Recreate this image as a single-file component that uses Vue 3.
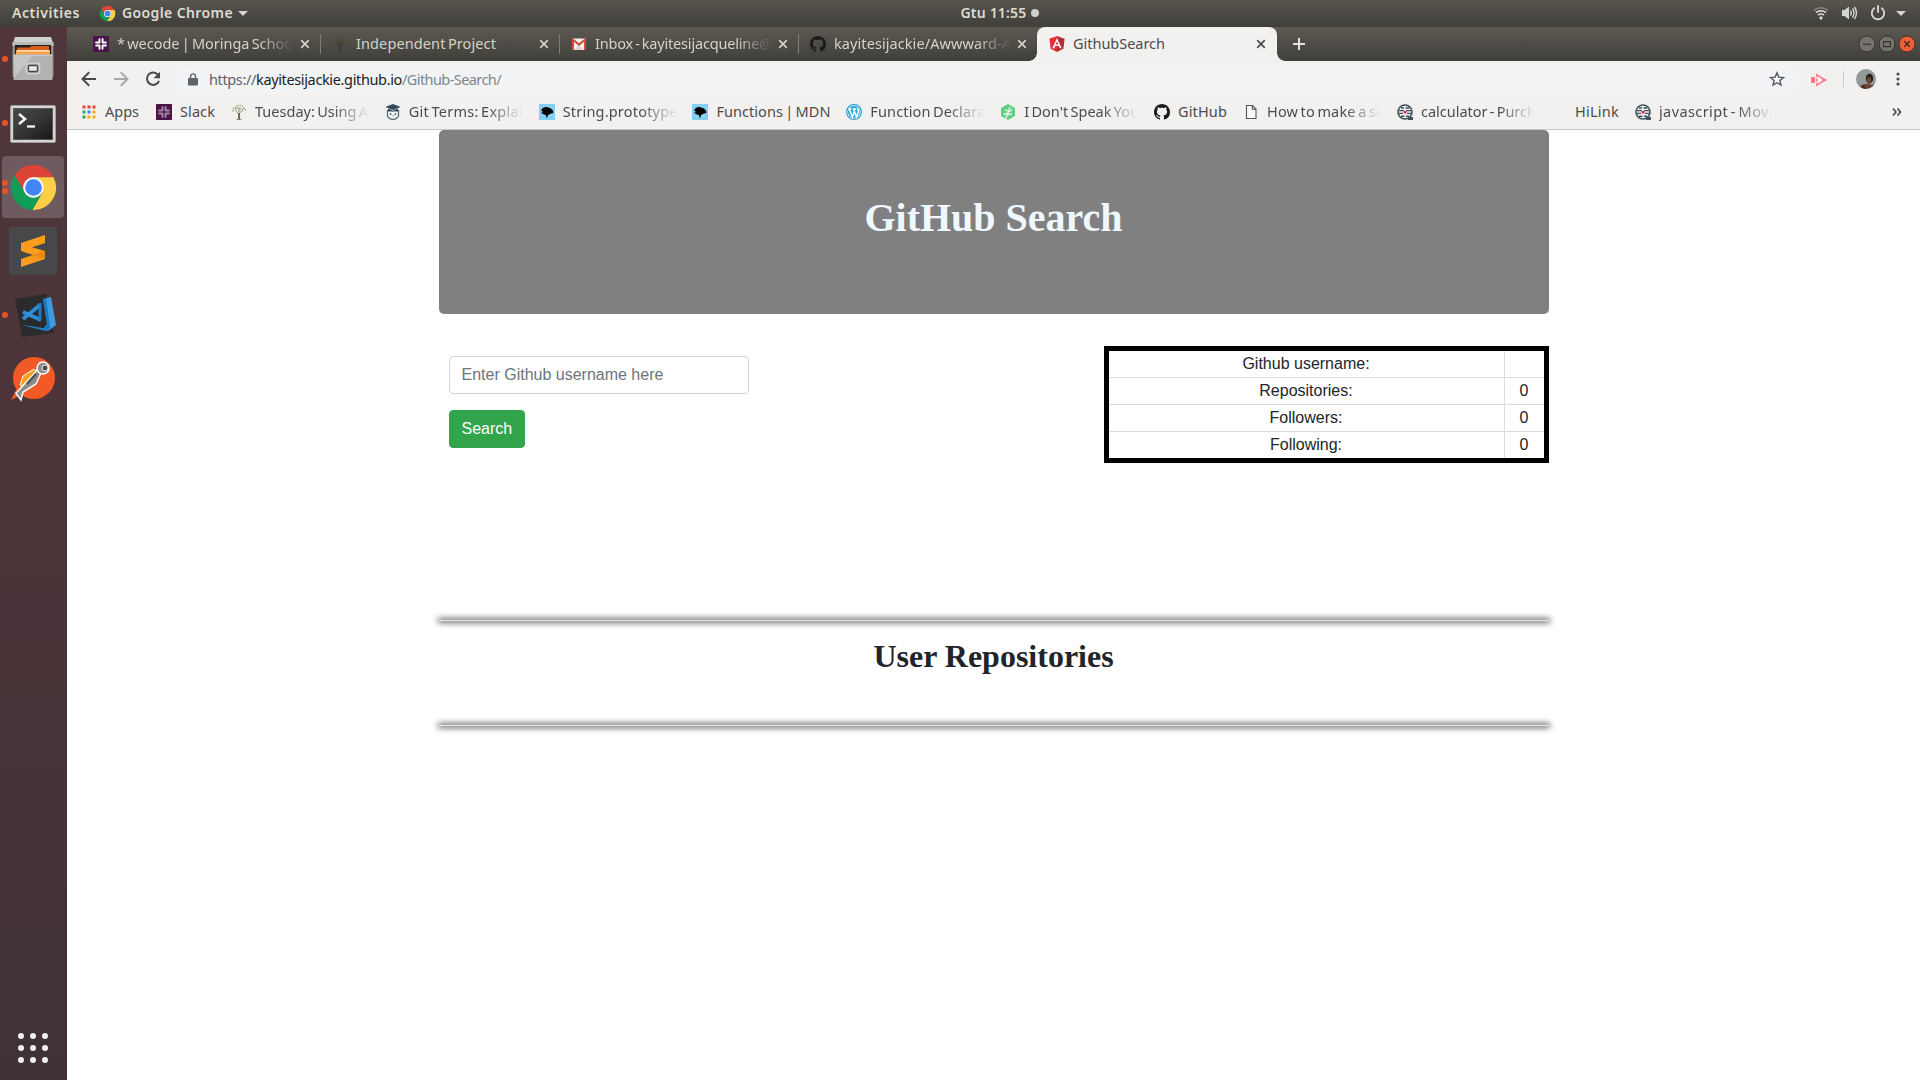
<script setup>
const tabs = [
  { icon: 'slack', title: '* wecode | Moringa Schoo', w: 176, fade: true },
  { icon: 'tree-dark', title: 'Independent Project', w: 140 },
  { icon: 'gmail', title: 'Inbox - kayitesijacqueline@', w: 177, fade: true },
  { icon: 'github', title: 'kayitesijackie/Awwward-A', w: 177, fade: true },
  { icon: 'angular', title: 'GithubSearch', w: 92, active: true },
]

const bookmarks = [
  { icon: 'apps', title: 'Apps', w: 34, item: 75 },
  { icon: 'slack-muted', title: 'Slack', w: 35, item: 75 },
  { icon: 'tree', title: 'Tuesday: Using A', w: 113, item: 153.83, fade: true },
  { icon: 'owl', title: 'Git Terms: Explai', w: 114, item: 153.83, fade: true },
  { icon: 'mdn', title: 'String.prototype', w: 115, item: 153.83, fade: true },
  { icon: 'mdn', title: 'Functions | MDN', w: 114, item: 153.83 },
  { icon: 'wordpress', title: 'Function Declara', w: 115, item: 153.83, fade: true },
  { icon: 'treehouse', title: "I Don't Speak You", w: 115, item: 153.83, fade: true },
  { icon: 'github', title: 'GitHub', w: 49, item: 89 },
  { icon: 'page', title: 'How to make a si', w: 113, item: 154, fade: true },
  { icon: 'movie', title: 'calculator - Purch', w: 115, item: 154, fade: true },
  { icon: '', title: 'HiLink', w: 44, item: 84 },
  { icon: 'movie', title: 'javascript - Movi', w: 114, item: 154, fade: true },
]

const stats = [
  ['Github username:', ''],
  ['Repositories:', '0'],
  ['Followers:', '0'],
  ['Following:', '0'],
]

// Adjusts tracking so that a label takes the given width in pixels.
const vFit = {
  mounted(el, { value }) {
    el.style.letterSpacing = '0px'
    const range = document.createRange()
    range.selectNodeContents(el)
    const natural = range.getBoundingClientRect().width
    el.style.letterSpacing = `${(value - natural) / el.textContent.length}px`
  },
}
</script>

<template>
  <svg class="defs" width="0" height="0">
    <symbol id="i-chrome" viewBox="0 0 48 48">
      <path fill="#dc4437" d="M5.5 12A22 22 0 0 1 43.6 14H24L15.3 29z" />
      <path fill="#ffce44" d="M43.6 14A22 22 0 0 1 22.9 46L32.7 29 24 14z" />
      <path fill="#109d58" d="M22.9 46A22 22 0 0 1 5.5 12L15.3 29H32.7z" />
      <circle cx="24" cy="24" r="10.2" fill="#f1f1f1" />
      <circle cx="24" cy="24" r="8.1" fill="#4285f4" />
    </symbol>
    <symbol id="i-slack" viewBox="0 0 16 16">
      <path fill="#4a154b" d="M0 0h16v16H0z" />
      <g fill="none" stroke="#fff" stroke-width="1.9" stroke-linecap="round">
        <path d="M6.5 5.8V3.2M3 6.5h3.5M9.600 3v3.500M9.600 6.500h3.200M3.200 9.500h3.300M6.500 9.500v3.400M9.500 9.500H13M9.500 9.500v3.300" />
      </g>
    </symbol>
    <symbol id="i-slack-muted" viewBox="0 0 16 16">
      <path fill="#4a154b" d="M0 0h16v16H0z" />
      <g fill="none" stroke="#a58aa6" stroke-width="1.900" stroke-linecap="round">
        <path d="M6.500 5.800V3.200M3 6.500h3.500M9.600 3v3.500M9.600 6.500h3.200M3.200 9.500h3.300M6.500 9.500v3.400M9.500 9.500H13M9.500 9.500v3.300" />
      </g>
    </symbol>
    <symbol id="i-tree" viewBox="0 0 16 16">
      <path fill="none" stroke="#77765c" stroke-width=".9" d="M8 10L4.500 6.500M8 9.500L11.800 6M8 8V3.500M5.500 15.300h5" />
      <path fill="none" stroke="#a0a57c" stroke-width="1.500" stroke-dasharray="1.500 1" d="M2 7.500Q1.500 3.500 5 3.500Q6 .8 9 1.500Q12.500 1.500 12.500 4.200Q15 5 14 7.500M4 5.500Q8 3 12 6" />
      <path stroke="#5b5a44" stroke-width="1.700" d="M8 15.500V9" />
    </symbol>
    <symbol id="i-tree-dark" viewBox="0 0 16 16">
      <path fill="none" stroke="#403f2e" stroke-width="1.100" d="M8 15.500V8M8 10L4.500 6.500M8 9.500L11.800 6M8 8V3.500" />
      <path fill="none" stroke="#4a4b2c" stroke-width="1.500" stroke-dasharray="1.500 1" d="M2 7.500Q1.500 3.500 5 3.500Q6 .8 9 1.500Q12.500 1.500 12.500 4.200Q15 5 14 7.500M4 5.500Q8 3 12 6" />
      <path stroke="#3a392b" stroke-width="1.800" d="M8 15V9" />
    </symbol>
    <symbol id="i-gmail" viewBox="0 0 16 16">
      <path fill="#f2f2f2" d="M1 2.500h14v11.500H1z" />
      <path fill="#d8d8d8" d="M3 14l5-5 5 5z" />
      <path fill="#d54b3d" d="M1 2.500h2v11.500H1zM13 2.500h2v11.500h-2z" />
      <path fill="none" stroke="#d54b3d" stroke-width="2" d="M1.500 3.200L8 8.600l6.500-5.400" />
    </symbol>
    <symbol id="i-github" viewBox="0 0 16 16">
      <path fill="#1b1b1b" d="M8 0C3.58 0 0 3.58 0 8c0 3.54 2.29 6.53 5.47 7.59.4.07.55-.17.55-.38 0-.19-.01-.82-.01-1.49-2.01.37-2.53-.49-2.69-.94-.09-.23-.48-.94-.82-1.13-.28-.15-.68-.52-.01-.53.63-.01 1.08.58 1.23.82.72 1.21 1.87.87 2.33.66.07-.52.28-.87.51-1.07-1.78-.2-3.64-.89-3.64-3.95 0-.87.31-1.59.82-2.15-.08-.2-.36-1.02.08-2.12 0 0 .67-.21 2.2.82.64-.18 1.32-.27 2-.27s1.36.09 2 .27c1.53-1.04 2.2-.82 2.2-.82.44 1.1.16 1.92.08 2.12.51.56.82 1.27.82 2.15 0 3.07-1.87 3.75-3.65 3.95.29.25.54.73.54 1.48 0 1.07-.01 1.93-.01 2.2 0 .21.15.46.55.38A8.01 8.01 0 0 0 16 8c0-4.42-3.58-8-8-8z" />
    </symbol>
    <symbol id="i-angular" viewBox="0 0 16 16">
      <path fill="#e23237" d="M8 0L.4 2.700l1.200 10L8 16z" />
      <path fill="#b52e31" d="M8 0l7.600 2.700-1.200 10L8 16z" />
      <path fill="#fff" fill-rule="evenodd" d="M8 2L3.400 12.200h1.900l.8-2.300h3.800l.8 2.300h1.900zM8 5.200l1.300 3.200H6.700z" />
    </symbol>
    <symbol id="i-apps" viewBox="0 0 16 16">
      <path fill="#ea4335" d="M1.500 1.500h3v3h-3zM6.500 1.500h3v3h-3zM11.500 1.500h3v3h-3z" />
      <path fill="#34a853" d="M1.500 6.500h3v3h-3zM1.500 11.500h3v3h-3z" />
      <path fill="#4285f4" d="M6.500 6.500h3v3h-3z" />
      <path fill="#fbae17" d="M11.500 6.500h3v3h-3zM6.500 11.500h3v3h-3zM11.500 11.500h3v3h-3z" />
    </symbol>
    <symbol id="i-owl" viewBox="0 0 16 16">
      <path fill="#fafafa" stroke="#4a6576" stroke-width="1.200" d="M2.500 6.500Q8 8 13.500 6.500V12q-1.500 3.300-5.500 3.300T2.500 12z" />
      <path fill="#2e4a5c" d="M8 0L.3 3 8 6l7.700-3zM3 4.500v3L8 6.500l5 1v-3L8 6.500z" />
      <circle cx="5.600" cy="10" r="1" fill="#4a6576" /><circle cx="10.400" cy="10" r="1" fill="#4a6576" />
      <path fill="#2e4a5c" d="M7.200 11.500h1.600l-.8 1.300z" />
    </symbol>
    <symbol id="i-mdn" viewBox="0 0 16 16">
      <path fill="#83d0f2" d="M0 0h16v16H0z" />
      <path fill="#000" d="M2 6.500L3.500 4.300Q6 2.500 8.500 3.200l3 1 2.700 2.600.1 2.200-3 .7-2.200 1.300-1.300 3.500-.8-3.200L4 10l-2-1.200L4.200 8z" />
    </symbol>
    <symbol id="i-wordpress" viewBox="0 0 16 16">
      <circle cx="8" cy="8" r="7.400" fill="#f4f8fa" stroke="#22a0d0" stroke-width="1.200" />
      <circle cx="8" cy="8" r="6" fill="#2aa6d6" />
      <path fill="none" stroke="#fff" stroke-width="1.500" d="M2.500 5h3M6.800 5h3.400M3.400 5l3 8L8.200 8M7.600 5l2.900 8 2.200-6.200-1.300-2.500" />
    </symbol>
    <symbol id="i-treehouse" viewBox="0 0 16 16">
      <path fill="#5fcf80" d="M8 0l7 4v8l-7 4-7-4V4z" />
      <path fill="none" stroke="#f4f4f2" stroke-width="1.300" stroke-linecap="round" d="M6 14L9.800 3.500M8.500 7L5.500 6M8.300 8l3.700-2M7.500 9.800l-3.500.2M7.300 10.500l4.200-.5" />
    </symbol>
    <symbol id="i-page" viewBox="0 0 16 16">
      <path fill="#fafafa" stroke="#555" stroke-width="1.100" d="M3.500 1.500h6l3.500 3.500v9.500H3.500zM9.300 1.500v3.800H13" />
    </symbol>
    <symbol id="i-movie" viewBox="0 0 16 16">
      <circle cx="8" cy="8" r="7" fill="#eef1f2" stroke="#40525b" stroke-width="1.600" />
      <path fill="#40525b" d="M11 13h5v3h-5zM4 3.200h3v1.500H4zM8.500 3.200h4v1.500h-4zM2 6h5v1.300H2zM9 6h5v1.300H9zM2 8.700h4V10H2zM10 8.700h4V10h-4zM4 11.400h3.500v1.500H4zM9 11.400h3v1.500H9z" />
      <path fill="#e4173c" d="M6.800 7h2.600v2.400H6.800z" />
    </symbol>
    <symbol id="i-close" viewBox="0 0 10 10">
      <path fill="none" stroke="currentColor" stroke-width="1.700" d="M1.200 1.200l7.600 7.600M8.800 1.200L1.200 8.800" />
    </symbol>
  </svg>

  <div class="desktop">
    <header class="topbar">
      <div class="top-left">
        <span v-fit="68" class="activities">Activities</span>
        <svg class="top-chrome" width="17" height="17"><use href="#i-chrome" /></svg>
        <span v-fit="111">Google Chrome</span>
        <i class="caret"></i>
      </div>
      <div class="clock"><span v-fit="66">Gtu 11:55</span><i class="dot"></i></div>
      <div class="status">
        <svg width="16" height="16" viewBox="0 0 16 16" fill="none" stroke="#d6d5d1" stroke-width="1.700">
          <path d="M1 5.200Q8 .3 15 5.200" opacity=".4" />
          <path d="M3 7.500Q8 4.200 13 7.500M5 10Q8 8 11 10" />
          <circle cx="8" cy="13" r="1.200" fill="#d6d5d1" stroke-width="1" />
        </svg>
        <svg width="17" height="16" viewBox="0 0 17 16" fill="none" stroke="#d6d5d1" stroke-width="1.400">
          <path fill="#d6d5d1" stroke="none" d="M1 5h2.500L8 1.500v13L3.500 11H1z" />
          <path d="M9.500 5.500q1.500 2.500 0 5M11.500 3.500q3 4.500 0 9M13.500 2q4 6 0 12" />
        </svg>
        <svg width="16" height="16" viewBox="0 0 16 16" fill="none" stroke="#d6d5d1" stroke-width="1.900">
          <path d="M4.800 2.800a6.200 6.200 0 1 0 6.400 0M8 .3v7.500" />
        </svg>
        <i class="caret"></i>
      </div>
    </header>

    <div class="below">
      <aside class="dock">
        <div class="slot files">
          <i class="run"></i>
          <svg width="44" height="46" viewBox="0 0 44 46">
            <path fill="#d0d0cf" d="M4 1h36l2 6H2z" />
            <path fill="#8d8d8c" d="M1.500 6h41v35h-41z" />
            <path fill="#b9b9b8" d="M1.500 6h41v4h-41z" />
            <path fill="#22201d" d="M4 9h36v12H4z" />
            <path fill="#d5601c" d="M6 11.500h13l1-1.500h18v10H6z" />
            <path fill="#f9a24a" d="M5 14h34v6H5z" /><path fill="#fff0dc" d="M6 14.300h32v1.200H6z" />
            <path fill="#b2b2b1" d="M2.500 18.500h39V44h-39z" />
            <path fill="#cfcfce" d="M2.500 18.500h39v1.500h-39zM2.500 18.500L22 19 3 42z" opacity=".7" />
            <rect x="15.500" y="27.500" width="13" height="10" rx="2" fill="#a5a5a4" stroke="#d2d2d1" stroke-width="1.500" />
            <rect x="17.500" y="29.500" width="9" height="6" rx="1" fill="#e8e8e8" stroke="#484848" stroke-width="1.300" />
          </svg>
        </div>
        <div class="slot term">
          <i class="run"></i>
          <svg width="46" height="38" viewBox="0 0 46 38">
            <defs><linearGradient id="tg" x1="0" y1="0" x2="1" y2="1"><stop offset="0" stop-color="#494b4b" /><stop offset=".55" stop-color="#333" /><stop offset="1" stop-color="#171717" /></linearGradient></defs>
            <rect x=".5" y=".5" width="45" height="37" rx="1.500" fill="#d5d5d4" stroke="#9c9c9b" />
            <rect x="3.500" y="3.500" width="39" height="31" fill="url(#tg)" stroke="#555" />
            <path fill="none" stroke="#f1f1f1" stroke-width="2.600" d="M9 9l6 5-6 5" />
            <path stroke="#fff" stroke-width="2.200" d="M17 21.500h8" />
          </svg>
        </div>
        <div class="slot chrome">
          <i class="run twin"></i>
          <svg width="49" height="49"><use href="#i-chrome" /></svg>
        </div>
        <div class="slot sublime">
          <svg width="48" height="48" viewBox="0 0 48 48">
            <rect width="48" height="48" rx="3" fill="#474849" />
            <path fill="#ff9c1b" d="M12 16l24-8v8l-24 8zM12 32l24-8v8l-24 8z" />
            <path fill="#ff9c1b" d="M12 16v8l12 4 12 4v-8L22 20z" />
            <path fill="#d67d10" d="M20 29.500L36 24v8l-8-2.600z" opacity=".6" />
          </svg>
        </div>
        <div class="slot code">
          <i class="run"></i>
          <svg width="42" height="44" viewBox="0 0 42 44">
            <path fill="#2b2b2d" d="M0 5L31 0l8 39L7 43z" />
            <path fill="#1679bd" d="M7 31l27 4-2 2z" />
            <path fill="#1f7fc5" d="M7 31l27 4 5-2-8 4z" />
            <path fill="#3b9ae0" d="M28 5l8-2 5 28-8 6-5-2 4-5z" />
            <path fill="#1b76bb" d="M28 5l4 25-4 5 5 2 2-4-4-29z" />
            <path fill="none" stroke="#2f8fd6" stroke-width="3.600" d="M8 18l18 8M8 25L25 11" />
            <path fill="none" stroke="#1d79c0" stroke-width="3" d="M25 9v17" />
          </svg>
        </div>
        <div class="slot postman">
          <svg width="46" height="46" viewBox="0 0 46 46">
            <circle cx="24" cy="22" r="21" fill="#f15a24" />
            <path fill="#f15a24" d="M1 44l10-5-4-7z" />
            <path fill="#8c8c8c" stroke="#f7f7f7" stroke-width="1.500" d="M27 14l4 3-5 11-13 8-2 8-3-4-2-3 4-4z" />
            <path fill="#f9a01b" stroke="#fff" stroke-width="1" d="M25 14l-14 15-2-1 3-9 11-7z" transform="translate(1 1)" />
            <path stroke="#555" stroke-width="2.500" d="M17 28l9-10" />
            <circle cx="33" cy="12" r="6" fill="#8d8d8d" stroke="#fff" stroke-width="1.500" />
            <circle cx="35" cy="12" r="3" fill="#4c4c4c" stroke="#eee" />
          </svg>
        </div>
        <div class="grid-button"><i v-for="n in 9" :key="n"></i></div>
      </aside>

      <main class="browser">
        <div class="tabstrip">
          <div v-for="tab in tabs" :key="tab.title" class="tab" :class="{ active: tab.active }">
            <svg width="16" height="16"><use :href="`#i-${tab.icon}`" /></svg>
            <div class="label" :class="{ fade: tab.fade }"><span v-fit="tab.w">{{ tab.title }}</span></div>
            <svg class="close" width="10" height="10"><use href="#i-close" /></svg>
          </div>
          <svg class="plus" width="12" height="12" viewBox="0 0 12 12"><path stroke="#e3e1dc" stroke-width="2" d="M6 0v12M0 6h12" /></svg>
          <div class="controls">
            <svg width="18" height="18" viewBox="0 0 18 18"><circle cx="9" cy="9" r="8" fill="#75736c" stroke="#36352f" /><path stroke="#36352f" stroke-width="1.200" d="M5 9.300h8" /></svg>
            <svg width="18" height="18" viewBox="0 0 18 18"><circle cx="9" cy="9" r="8" fill="#75736c" stroke="#36352f" /><path fill="none" stroke="#36352f" stroke-width="1.200" d="M5.600 6.600h6.800v5H5.600z" /></svg>
            <svg width="18" height="18" viewBox="0 0 18 18"><circle cx="9" cy="9" r="8" fill="#ea6037" stroke="#4e2c20" /><path stroke="#3f261d" stroke-width="1.300" d="M6.300 6.300l5.400 5.400M11.700 6.300l-5.400 5.400" /></svg>
          </div>
        </div>

        <div class="toolbar">
          <svg width="16" height="16" viewBox="0 0 16 16" fill="none" stroke="#494949" stroke-width="2"><path d="M15 8H2M8.200 1.300L1.500 8l6.700 6.700" /></svg>
          <svg width="16" height="16" viewBox="0 0 16 16" fill="none" stroke="#a9a9a8" stroke-width="2"><path d="M1 8h13M7.800 1.300L14.500 8l-6.700 6.700" /></svg>
          <svg width="16" height="16" viewBox="0 0 16 16" fill="none" stroke="#494949" stroke-width="2"><path d="M13.300 4.200A6.200 6.200 0 1 0 14 9.800" /><path fill="#494949" stroke="none" d="M15 .8v6.400H8.600z" /></svg>
          <div class="omnibox">
            <svg width="10" height="13" viewBox="0 0 10 13"><path fill="#5f6368" d="M1 5h8q1 0 1 1v5.500q0 1-1 1H1q-1 0-1-1V6q0-1 1-1z" /><path fill="none" stroke="#5f6368" stroke-width="1.400" d="M2.500 5.500V3.400a2.500 2.500 0 0 1 5 0v2.100" /></svg>
            <div class="url"><span v-fit="47">https://</span><span v-fit="146" class="host">kayitesijackie.github.io</span><span v-fit="99" class="path">/Github-Search/</span></div>
            <svg class="star" width="16" height="16" viewBox="0 0 16 16"><path fill="none" stroke="#56595d" stroke-width="1.400" d="M8 1.800l1.800 4.300 4.700.4-3.600 3 1.100 4.600L8 11.700l-4 2.400 1.100-4.600-3.600-3 4.700-.4z" /></svg>
          </div>
          <svg class="ext" width="16" height="14" viewBox="0 0 16 14"><path fill="#fb7b80" d="M0 4h4v6H0z" /><path fill="none" stroke="#fb7b80" stroke-width="1.500" d="M5.800 4V1.800L14 7l-8.200 5.200V10M5.800 5.500v3" /><path fill="#fb7b80" d="M11 4.500L16 7l-5 2.500z" /></svg>
          <i class="divider"></i>
          <svg class="avatar" width="20" height="20" viewBox="0 0 20 20">
            <defs><clipPath id="av"><circle cx="10" cy="10" r="10" /></clipPath></defs>
            <g clip-path="url(#av)">
              <path fill="#929a98" d="M0 0h20v20H0z" />
              <path fill="#6a4334" d="M2 20q3-5 8-5l9 1v4z" />
              <ellipse cx="13.500" cy="9.500" rx="3.700" ry="4.700" fill="#23201f" />
              <ellipse cx="13" cy="11.500" rx="2.300" ry="3.400" fill="#6d4535" />
              <path fill="#3a2a26" d="M5 20l2-4 3 4z" />
            </g>
          </svg>
          <svg class="menu" width="4" height="16" viewBox="0 0 4 16" fill="#4b4b4b"><circle cx="2" cy="3" r="1.600" /><circle cx="2" cy="8" r="1.600" /><circle cx="2" cy="13" r="1.600" /></svg>
        </div>

        <nav class="bookmarks">
          <div v-for="(b, i) in bookmarks" :key="i" class="bookmark" :style="{ width: b.item + 'px' }">
            <svg width="16" height="16"><use v-if="b.icon" :href="`#i-${b.icon}`" /></svg>
            <div class="label" :class="{ fade: b.fade }"><span v-fit="b.w">{{ b.title }}</span></div>
          </div>
          <svg class="more" width="10" height="10" viewBox="0 0 10 10"><path fill="none" stroke="#454545" stroke-width="1.600" d="M1 1.500L4 5 1 8.500M5.500 1.500l3 3.500-3 3.500" /></svg>
        </nav>

        <div class="page">
          <div class="container">
            <div class="jumbotron"><h1>GitHub Search</h1></div>
            <div class="row">
              <form class="search" @submit.prevent>
                <input type="text" placeholder="Enter Github username here" />
                <button type="submit">Search</button>
              </form>
              <table>
                <tbody>
                  <tr v-for="[name, count] in stats" :key="name"><td>{{ name }}</td><td>{{ count }}</td></tr>
                </tbody>
              </table>
            </div>
            <hr />
            <h2>User Repositories</h2>
            <hr />
          </div>
        </div>
      </main>
    </div>
  </div>
</template>

<style>
html, body { margin: 0; overflow: hidden; background: #fff; }
</style>

<style scoped>
* { box-sizing: border-box; }
svg { display: block; flex: none; }
.defs { position: absolute; }
.desktop { width: 1920px; height: 1080px; display: flex; flex-direction: column; font: 14.5px "Noto Sans", "Open Sans", sans-serif; overflow: hidden; }

.topbar { height: 27px; flex: none; display: flex; justify-content: space-between; align-items: center; background: linear-gradient(#58554d, #3f3e39); color: #dfdbd2; font-weight: 600; font-size: 14px; line-height: 26px; white-space: nowrap; padding: 0 14px 1px 12px; }
.top-left, .status, .clock { display: flex; align-items: center; }
.top-left, .status { width: 300px; }
.activities { width: 68px; margin-right: 19px; }
.top-chrome { margin-right: 6px; }
.caret { border: 5px solid transparent; border-top-color: #d6d5d1; border-bottom: 0; margin-left: 5px; }
.clock { margin-left: 151px; margin-right: 70px; }
.dot { width: 8px; height: 8px; border-radius: 50%; background: #d0cfcb; margin-left: 4px; }
.status { justify-content: flex-end; gap: 12px; }
.status .caret { margin-left: -2px; }

.below { flex: 1; display: flex; min-height: 0; }
.dock { width: 67px; flex: none; display: flex; flex-direction: column; align-items: center; padding-right: 1px; background: linear-gradient(#50363a, #4b3338 50%, #3e3235); }
.slot { width: 62px; height: 62px; margin: 0 2px 2px; display: flex; align-items: center; justify-content: center; position: relative; flex: none; }
.slot:first-child { margin-top: 1px; }
.slot.term { padding-top: 2px; }
.slot.chrome { background: #6f5a5f; border-radius: 4px; }
.code { padding-left: 5px; padding-top: 1px; }
.run { position: absolute; left: 0; top: 28px; width: 6px; height: 6px; border-radius: 50%; background: #e95420; }
.run.twin { top: 24px; box-shadow: 0 8px #e95420; }
.grid-button { margin: auto 0 17px; display: grid; grid-template-columns: repeat(3, 6px); gap: 6px; }
.grid-button i { width: 6px; height: 6px; border-radius: 50%; background: #f1f0ef; }

.browser { flex: 1; display: flex; flex-direction: column; min-width: 0; }
.tabstrip { height: 34px; flex: none; display: flex; align-items: center; background: linear-gradient(#5c5951, #403f3a); padding-left: 15px; color: #d5d2c9; }
.tab { width: 239px; height: 34px; flex: none; display: flex; align-items: center; padding-left: 11px; position: relative; }
.tab .label { width: 177px; margin-left: 8px; margin-right: 6px; }
.tab:not(.active):not(:nth-child(4))::after { content: ""; position: absolute; right: 0; top: 7px; width: 1px; height: 20px; background: #817e76; }
.tab.active { width: 240px; margin-left: -1px; background: #f2f1f0; color: #4c4c4c; border-radius: 8px 8px 0 0; padding-left: 12px; }
.tab.active::before, .tab.active::after { content: ""; position: absolute; bottom: 0; width: 8px; height: 8px; }
.tab.active::before { left: -8px; background: radial-gradient(circle at 0 0, transparent 7.5px, #f2f1f0 8px); }
.tab.active::after { right: -8px; background: radial-gradient(circle at 100% 0, transparent 7.5px, #f2f1f0 8px); }
.label { white-space: nowrap; overflow: hidden; height: 22px; line-height: 20px; word-spacing: -1.5px; }
.label.fade { -webkit-mask-image: linear-gradient(90deg, #000 calc(100% - 36px), transparent); mask-image: linear-gradient(90deg, #000 calc(100% - 36px), transparent); }
.plus { margin-left: 16px; }
.controls { margin-left: auto; margin-right: 4px; display: flex; gap: 2px; }

.toolbar { height: 38px; flex: none; background: #f2f1f0; display: flex; align-items: center; padding: 0 20px 2px 14px; gap: 16px; }
.omnibox { width: 1620px; height: 28px; margin-left: -2px; border-radius: 14px; background: #f1f3f4; display: flex; align-items: center; padding: 0 10px 0 13px; }
.url { margin-left: 11px; white-space: nowrap; display: flex; color: #5f6368; }
.host { color: #202124; }
.path { color: #80868b; }
.star { margin-left: auto; }
.ext { margin: 2px 0 0; }
.divider { width: 1px; height: 16px; background: #cbcac9; }
.avatar { margin-left: -4px; }
.menu { margin-left: 4px; }

.bookmarks { height: 31px; flex: none; background: #f2f1f0; border-bottom: 1px solid #c9c8c7; display: flex; align-items: center; padding: 0 18px 4px 14px; color: #4c4c4c; }
.bookmark { flex: none; display: flex; align-items: center; }
.bookmark .label { margin-left: 8px; }
.bookmark .label.fade { width: 114px; }
.more { margin-left: auto; }

.page { flex: 1; background: #fff; color: #212529; font: 16px/24px "Liberation Sans", Arial, sans-serif; }
.container { width: 1110px; margin: 0 auto; }
.jumbotron { height: 184px; background: gray; border-radius: 5px; padding-top: 64px; text-align: center; }
h1, h2 { font-family: "Liberation Serif", "Times New Roman", serif; font-weight: 700; margin: 0; text-align: center; }
h1 { font-size: 40px; line-height: 48px; color: aliceblue; }
h2 { font-size: 32px; line-height: 38px; margin-top: 16px; margin-bottom: 50px; }
.row { height: 306px; display: flex; justify-content: space-between; align-items: flex-start; padding-top: 32px; }
.search { padding: 10px; display: flex; flex-direction: column; align-items: flex-start; gap: 16px; }
input { width: 300px; height: 38px; border: 1px solid #ced4da; border-radius: 4px; padding: 6px 12px; font: inherit; color: #495057; background: #fff; }
input::placeholder { color: #6c757d; opacity: 1; }
button { height: 38px; border: 1px solid #32a44c; border-radius: 4px; padding: 6px 12px; font: inherit; line-height: 24px; color: #fff; background: #32a44c; }
table { width: 445px; height: 117px; border: 5px solid #000; border-collapse: separate; border-spacing: 0; text-align: center; table-layout: fixed; }
td { padding: 0; height: 27px; border-bottom: 1px solid #dcdcdc; line-height: 24px; }
tr:last-child td { border-bottom: 0; height: 26px; }
td:first-child { width: 396px; border-right: 1px solid #dcdcdc; }
hr { height: 1px; margin: 0; border: 0; background: #e5e5e5; box-shadow: 0 0 6px 1px #000; }
</style>
